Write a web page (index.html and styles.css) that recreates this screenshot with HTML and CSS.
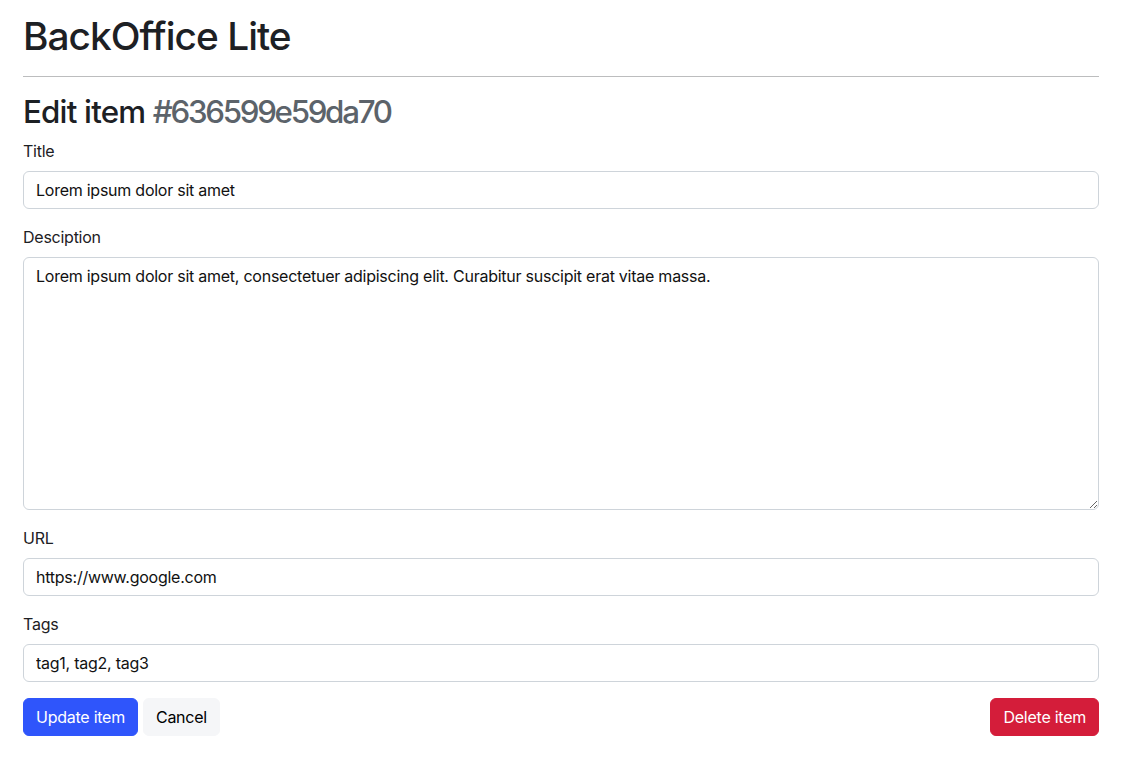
FILE: index.html
```html
<!DOCTYPE html>
<html lang="en">
<head>
<meta charset="utf-8">
<title>BackOffice Lite</title>
<link rel="stylesheet" href="styles.css">
</head>
<body>
<div class="container">
  <h1 class="brand">BackOffice Lite</h1>
  <hr class="divider">
  <h2 class="page-title">Edit item <span class="muted">#636599e59da70</span></h2>
  <form class="form">
    <div class="field">
      <label class="label" for="title">Title</label>
      <input class="control" id="title" type="text" value="Lorem ipsum dolor sit amet">
    </div>
    <div class="field">
      <label class="label" for="desc">Desciption</label>
      <textarea class="control area" id="desc" rows="10">Lorem ipsum dolor sit amet, consectetuer adipiscing elit. Curabitur suscipit erat vitae massa.</textarea>
    </div>
    <div class="field">
      <label class="label" for="url">URL</label>
      <input class="control" id="url" type="text" value="https://www.google.com">
    </div>
    <div class="field">
      <label class="label" for="tags">Tags</label>
      <input class="control" id="tags" type="text" value="tag1, tag2, tag3">
    </div>
    <div class="actions">
      <div class="left">
        <button type="button" class="btn btn-primary">Update item</button>
        <button type="button" class="btn btn-light">Cancel</button>
      </div>
      <button type="button" class="btn btn-danger">Delete item</button>
    </div>
  </form>
</div>
</body>
</html>
```

FILE: styles.css
```css
* { box-sizing: border-box; }
html, body { margin: 0; padding: 0; background: #fff; }
body {
  font-family: Inter, "Noto Sans", "Liberation Sans", sans-serif;
  font-size: 16px;
  line-height: 1.5;
  color: #1d2024;
  letter-spacing: -0.25px;
}
.container { padding: 13px 23px 0 23px; }
.brand {
  margin: 0 0 8px 0;
  font-size: 38.8px;
  font-weight: 500;
  line-height: 1.2;
  letter-spacing: -0.95px;
}
.divider {
  margin: 16px 0 17px 0;
  border: 0;
  border-top: 1px solid #212529;
  opacity: .3;
}
.page-title {
  margin: 0 0 8px 0;
  font-size: 31.3px;
  font-weight: 500;
  line-height: 1.2;
  letter-spacing: -0.8px;
}
.muted { color: #5c636a; letter-spacing: -2.3px; }
.field { margin-bottom: 16px; }
.label { display: block; margin-bottom: 8px; font-size: 16px; }
.control {
  display: block;
  width: 100%;
  padding: 6px 12px;
  font-family: inherit;
  font-size: 16px;
  line-height: 1.5;
  letter-spacing: -0.25px;
  color: #111;
  background: #fff;
  border: 1px solid #ced4da;
  border-radius: 6px;
  outline: none;
}
.area { height: 253px; resize: vertical; }
.actions { display: flex; justify-content: space-between; align-items: center; }
.left { display: flex; gap: 5px; }
.btn {
  font-family: inherit;
  font-size: 16px;
  line-height: 1.5;
  letter-spacing: -0.25px;
  padding: 6px 12px;
  border: 1px solid transparent;
  border-radius: 6px;
  cursor: pointer;
}
.btn-primary { background: #2f55fb; border-color: #2f55fb; color: #fff; }
.btn-light { background: #f5f6f8; border-color: #f5f6f8; color: #000; }
.btn-danger { background: #d41d3a; border-color: #d41d3a; color: #fff; }
```
